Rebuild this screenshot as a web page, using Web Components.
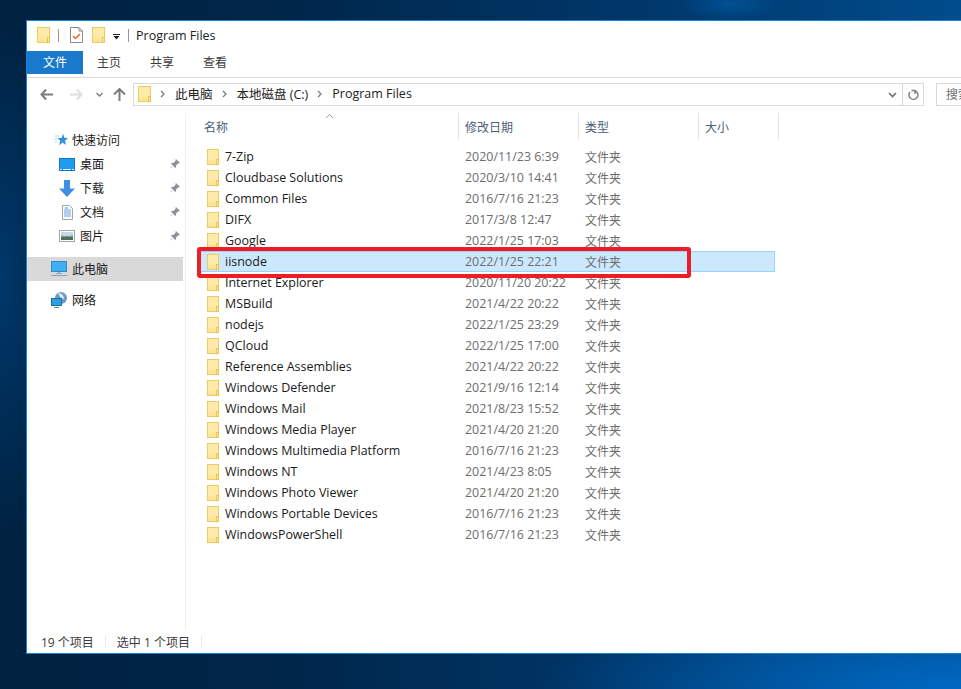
<!DOCTYPE html>
<html lang="zh-CN">
<head>
<meta charset="utf-8">
<title>Program Files</title>
<style>
html, body { margin: 0; height: 100%; overflow: hidden; }
body { font: 12px "Open Sans", "Noto Sans CJK SC", sans-serif; color: #1a1a1a; }
</style>
</head>
<body>
<win-desktop>
  <explorer-window>
    <title-bar slot="top" label="Program Files"></title-bar>
    <ribbon-tabs slot="top"></ribbon-tabs>
    <nav-bar slot="top"></nav-bar>
    <side-nav slot="side">
      <side-item kind="star" text="快速访问" style="--indent:27px;--gap:4px;--icon:14px"></side-item>
      <side-item kind="desktop" text="桌面" pinned></side-item>
      <side-item kind="down" text="下载" pinned></side-item>
      <side-item kind="doc" text="文档" pinned></side-item>
      <side-item kind="pic" text="图片" pinned></side-item>
      <side-item kind="pc" text="此电脑" selected style="--indent:24px;--gap:5px;margin-top:9px"></side-item>
      <side-item kind="net" text="网络" style="--indent:24px;--gap:5px;margin-top:7px"></side-item>
    </side-nav>
    <file-list slot="main">
      <file-row name="7-Zip" date="2020/11/23 6:39"></file-row>
      <file-row name="Cloudbase Solutions" date="2020/3/10 14:41"></file-row>
      <file-row name="Common Files" date="2016/7/16 21:23"></file-row>
      <file-row name="DIFX" date="2017/3/8 12:47"></file-row>
      <file-row name="Google" date="2022/1/25 17:03"></file-row>
      <file-row name="iisnode" date="2022/1/25 22:21" selected></file-row>
      <file-row name="Internet Explorer" date="2020/11/20 20:22"></file-row>
      <file-row name="MSBuild" date="2021/4/22 20:22"></file-row>
      <file-row name="nodejs" date="2022/1/25 23:29"></file-row>
      <file-row name="QCloud" date="2022/1/25 17:00"></file-row>
      <file-row name="Reference Assemblies" date="2021/4/22 20:22"></file-row>
      <file-row name="Windows Defender" date="2021/9/16 12:14"></file-row>
      <file-row name="Windows Mail" date="2021/8/23 15:52"></file-row>
      <file-row name="Windows Media Player" date="2021/4/20 21:20"></file-row>
      <file-row name="Windows Multimedia Platform" date="2016/7/16 21:23"></file-row>
      <file-row name="Windows NT" date="2021/4/23 8:05"></file-row>
      <file-row name="Windows Photo Viewer" date="2021/4/20 21:20"></file-row>
      <file-row name="Windows Portable Devices" date="2016/7/16 21:23"></file-row>
      <file-row name="WindowsPowerShell" date="2016/7/16 21:23"></file-row>
    </file-list>
    <status-bar slot="bottom"></status-bar>
  </explorer-window>
</win-desktop>

<script>
const FOLDER = (w, h) => `
  <svg width="${w}" height="${h}" viewBox="0 0 ${w} ${h}" style="display:block;flex:none">
    <rect x=".5" y=".5" width="${w - 1}" height="${h - 1}" fill="#ffe595" stroke="#eecb62"/>
    <rect x="1" y="1" width="${w - 2}" height="${h - 6}" fill="#ffeaa9"/>
    <rect x="${w - 2.5}" y="${h - 5.5}" width="2" height="5" fill="#ffe9a0" stroke="#eac453"/>
  </svg>`;

const SIDE_ICONS = {
  star: `<svg width="14" height="14" viewBox="0 0 14 14"><path d="M1 3h4M0 6h3M1 9h2" stroke="#a9d4f5"/><path d="M9 .5l1.300 4.300 3.700.2-3 2.700 1 4.300-3.300-2.500-3.700 2.700 1.300-4.400L3.500 5l4.200-.1z" fill="#2f90e2"/></svg>`,
  desktop: `<svg width="16" height="13" viewBox="0 0 16 13"><rect width="16" height="13" fill="#0f78d4"/><rect x="1" y="1" width="14" height="10" fill="#1f9bf0"/><path d="M1 11.500h14" stroke="#e8f4fd"/><path d="M3 11.500h1M12 11.500h1" stroke="#0f78d4"/></svg>`,
  down: `<svg width="16" height="17" viewBox="0 0 16 17"><path d="M5 0h6v8.500h5L8 17 0 8.500h5z" fill="#3f8fe4"/></svg>`,
  doc: `<svg width="11" height="15" viewBox="0 0 11 15"><path d="M.5.500h7l3 3v11H.5z" fill="#fbfbfb" stroke="#9ea5ab"/><path d="M2 5h7M2 7h7M2 9h7M2 11h7" stroke="#6ba6da"/><path d="M3 3h3" stroke="#3f8fd0"/></svg>`,
  pic: `<svg width="16" height="12" viewBox="0 0 16 12"><rect x=".5" y=".5" width="15" height="11" fill="#fff" stroke="#a6a6a6"/><rect x="2" y="2" width="12" height="4" fill="#c6d9e6"/><rect x="2" y="6" width="12" height="4" fill="#4f7060"/><path d="M2 5l6 1.500 6-1.500v2H2z" fill="#8aa99a"/></svg>`,
  pc: `<svg width="16" height="16" viewBox="0 0 16 16"><rect x=".5" y=".5" width="15" height="10" fill="#3db0f2" stroke="#3a88bf"/><path d="M5 12.500h6M7 11.500h2" stroke="#8fa9bb"/><path d="M0 14.500h16" stroke="#7ea6c3"/></svg>`,
  net: `<svg width="16" height="16" viewBox="0 0 16 16"><circle cx="10" cy="6" r="6" fill="#6d9bc4"/><path d="M7 1c3 0 6 2 6 6l-3-1-2-3z" fill="#d8e9f6"/><rect x=".5" y="6.500" width="10" height="7" fill="#2aa0e0" stroke="#1c6f9f"/><path d="M3 15.500h5" stroke="#6c8ca3"/></svg>`
};

const CRUMB = `<svg class="crumb" width="5" height="8" viewBox="0 0 5 8"><path d="M1 1l3 3-3 3" fill="none" stroke="#7c7c7c" stroke-width="1.300"/></svg>`;

class WinDesktop extends HTMLElement {
  connectedCallback() {
    this.attachShadow({ mode: 'open' }).innerHTML = `
      <style>
        :host {
          display: block;
          box-sizing: border-box;
          width: 961px;
          height: 689px;
          padding: 20px 0 0 26px;
          overflow: hidden;
          background:
            radial-gradient(50px 16px at 730px 4px, rgba(0,95,170,.6), transparent),
            radial-gradient(420px 90px at 100% 100%, #0068c2, transparent),
            radial-gradient(70px 270px at 0 280px, #00386c, transparent),
            linear-gradient(90deg, #00213f 0, #00264a 30%, #003a70 72%, #004c8c 100%);
        }
      </style>
      <slot></slot>`;
  }
}

class ExplorerWindow extends HTMLElement {
  connectedCallback() {
    this.attachShadow({ mode: 'open' }).innerHTML = `
      <style>
        :host {
          display: flex;
          flex-direction: column;
          box-sizing: border-box;
          width: 960px;
          height: 634px;
          background: #fff;
          border: 1px solid #1883d7;
          border-right: 0;
        }
        .body { flex: 1; display: flex; min-height: 0; padding-top: 7px; }
      </style>
      <slot name="top"></slot>
      <div class="body">
        <slot name="side"></slot>
        <slot name="main"></slot>
      </div>
      <slot name="bottom"></slot>`;
  }
}

class TitleBar extends HTMLElement {
  connectedCallback() {
    this.attachShadow({ mode: 'open' }).innerHTML = `
      <style>
        :host {
          display: flex;
          align-items: center;
          box-sizing: border-box;
          height: 30px;
          padding: 0 0 2px 10px;
          font-size: 12.5px;
          color: #222;
        }
        .sep { width: 1px; height: 13px; background: #9a9a9a; }
      </style>
      ${FOLDER(13, 16)}
      <span class="sep" style="margin-left:8px"></span>
      <svg style="margin-left:11px;flex:none" width="13" height="16" viewBox="0 0 13 16">
        <path d="M.5.500h8.500l3.500 3.500v11.500H.5z" fill="#fff" stroke="#8a8a8a"/>
        <path d="M9 .5v3.500h3.500" fill="none" stroke="#8a8a8a"/>
        <path d="M3 9l2.500 2.500L10 7" fill="none" stroke="#e8632a" stroke-width="1.500"/>
      </svg>
      <span style="display:block;margin-left:9px">${FOLDER(13, 16)}</span>
      <svg style="margin-left:8px;flex:none;margin-top:3px" width="7" height="6" viewBox="0 0 7 6">
        <path d="M0 .5h7" stroke="#222"/><path d="M.5 2h6L3.500 5.500z" fill="#222"/>
      </svg>
      <span class="sep" style="margin-left:8px"></span>
      <span style="margin-left:7px">${this.getAttribute('label')}</span>`;
  }
}

class RibbonTabs extends HTMLElement {
  connectedCallback() {
    this.attachShadow({ mode: 'open' }).innerHTML = `
      <style>
        :host {
          display: flex;
          height: 26px;
          border-bottom: 1px solid #dadbdc;
          font-size: 12px;
          color: #3b3b3b;
        }
        span { height: 23px; line-height: 23px; padding: 0 15px 0 14px; }
        .file { width: 56px; padding: 0; text-align: center; background: #1979ca; color: #fff; }
      </style>
      <span class="file">文件</span><span>主页</span><span>共享</span><span>查看</span>`;
  }
}

class NavBar extends HTMLElement {
  connectedCallback() {
    this.attachShadow({ mode: 'open' }).innerHTML = `
      <style>
        :host {
          display: flex;
          align-items: center;
          padding: 5px 0 0 13px;
          font-size: 12.5px;
          color: #222;
        }
        svg { display: block; flex: none; }
        .address {
          display: flex;
          align-items: center;
          flex: none;
          box-sizing: border-box;
          width: 791px;
          height: 23px;
          margin-left: 7px;
          padding: 0 0 2px 4px;
          border: 1px solid #d9d9d9;
        }
        .crumb { margin: 0 10px 0 9px; }
        .spacer { flex: 1; }
        .drop { margin-top: 3px; }
        .refresh {
          display: flex;
          align-items: center;
          justify-content: center;
          width: 20px;
          align-self: stretch;
          margin: 0 0 -2px 5px;
          border-left: 1px solid #d9d9d9;
        }
        .search {
          flex: none;
          box-sizing: border-box;
          width: 60px;
          height: 23px;
          line-height: 21px;
          margin-left: 12px;
          padding-left: 9px;
          border: 1px solid #d9d9d9;
          color: #6d6d6d;
          font-size: 12px;
          white-space: nowrap;
          overflow: hidden;
        }
      </style>
      <svg width="13" height="11" viewBox="0 0 13 11"><path d="M6 .5L1.500 5.500 6 10.500M1.500 5.500H13" fill="none" stroke="#7c7c7c" stroke-width="2"/></svg>
      <svg style="margin-left:17px" width="13" height="11" viewBox="0 0 13 11"><path d="M7 .5l4.500 5L7 10.500M11.500 5.500H0" fill="none" stroke="#dedede" stroke-width="2"/></svg>
      <svg style="margin-left:13px" width="7" height="5" viewBox="0 0 7 5"><path d="M.5 1l3 3 3-3" fill="none" stroke="#7c7c7c" stroke-width="1.300"/></svg>
      <svg style="margin-left:10px" width="13" height="13" viewBox="0 0 13 13"><path d="M1 6.500l5.500-5.500 5.500 5.500M6.500 1.500V13" fill="none" stroke="#7c7c7c" stroke-width="2"/></svg>
      <div class="address">
        ${FOLDER(13, 16)}
        ${CRUMB}
        <span>此电脑</span>
        ${CRUMB}
        <span>本地磁盘 (C:)</span>
        ${CRUMB}
        <span>Program Files</span>
        <span class="spacer"></span>
        <svg class="drop" width="9" height="6" viewBox="0 0 9 6"><path d="M1 1l3.500 3.500L8 1" fill="none" stroke="#6e6e6e" stroke-width="1.600"/></svg>
        <span class="refresh"><svg width="11" height="12" viewBox="0 0 11 12"><path d="M3.500 1.500H7V5M6.500 1.500a4.500 4.500 0 1 1-4.500 1.500" fill="none" stroke="#7c7c7c" stroke-width="1.400"/></svg></span>
      </div>
      <div class="search">搜索"Program Files"</div>`;
  }
}

class SideNav extends HTMLElement {
  connectedCallback() {
    this.attachShadow({ mode: 'open' }).innerHTML = `
      <style>
        :host {
          display: block;
          box-sizing: border-box;
          width: 159px;
          flex: none;
          padding-top: 15px;
          border-right: 1px solid #f0f0f0;
          font-size: 12px;
        }
      </style>
      <slot></slot>`;
  }
}

class SideItem extends HTMLElement {
  connectedCallback() {
    const kind = this.getAttribute('kind');
    const selected = this.hasAttribute('selected');
    this.attachShadow({ mode: 'open' }).innerHTML = `
      <style>
        :host {
          display: flex;
          align-items: center;
          box-sizing: border-box;
          width: 156px;
          height: 24px;
          padding-left: var(--indent, 32px);
          background: ${selected ? '#d9d9d9' : 'transparent'};
          color: #1a1a1a;
        }
        .icon { width: var(--icon, 16px); display: flex; justify-content: center; flex: none; }
        .text { margin-left: var(--gap, 5px); flex: 1; }
        .pin { margin-right: 3px; display: block; }
      </style>
      <span class="icon">${SIDE_ICONS[kind]}</span>
      <span class="text">${this.getAttribute('text')}</span>
      ${this.hasAttribute('pinned') ? `<svg class="pin" width="10" height="10" viewBox="0 0 10 10"><path d="M6 0l4 4-1 .6-.8-.3L6 6.500 6.200 8 5 9 3.300 6.700.5 9.500l-.3-.3L3 6.500 1 4.800 2 3.800l1.500.2L5.700 1.800l-.3-.8z" fill="#8b9198"/></svg>` : ''}`;
  }
}

class FileList extends HTMLElement {
  connectedCallback() {
    this.attachShadow({ mode: 'open' }).innerHTML = `
      <style>
        :host { display: block; flex: 1; position: relative; min-width: 0; font-size: 12.45px; }
        .head { display: flex; height: 27px; padding-left: 12px; color: #4c607a; font-size: 12px; position: relative; }
        .head span { box-sizing: border-box; line-height: 29px; padding-left: 6px; border-right: 1px solid #e5e5e5; }
        .sort { position: absolute; left: 139px; top: 0; display: block; }
        .rows { padding: 6px 0 0 11px; }
        .mark {
          position: absolute;
          left: 11px;
          top: 134px;
          width: 494px;
          height: 31px;
          box-sizing: border-box;
          border: 4px solid #ee1c25;
          border-radius: 3px;
          pointer-events: none;
        }
      </style>
      <div class="head">
        <svg class="sort" width="9" height="6" viewBox="0 0 9 6"><path d="M1 5l3.500-3.500L8 5" fill="none" stroke="#9aa0a6"/></svg>
        <span style="width:261px">名称</span>
        <span style="width:120px">修改日期</span>
        <span style="width:120px">类型</span>
        <span style="width:80px">大小</span>
      </div>
      <div class="rows"><slot></slot></div>
      <div class="mark"></div>`;
  }
}

class FileRow extends HTMLElement {
  connectedCallback() {
    const selected = this.hasAttribute('selected');
    this.attachShadow({ mode: 'open' }).innerHTML = `
      <style>
        :host {
          display: flex;
          align-items: center;
          box-sizing: border-box;
          width: 578px;
          height: 21px;
          padding-left: 10px;
          ${selected ? 'background:#cce8ff;box-shadow:inset 0 0 0 1px #99d1ff;' : ''}
        }
        .name { width: 240px; margin-left: 6px; color: #1a1a1a; white-space: nowrap; }
        .date { width: 120px; color: #6d6d6d; white-space: nowrap; }
        .type { color: #6d6d6d; font-size: 12px; }
      </style>
      ${FOLDER(12, 16)}
      <span class="name">${this.getAttribute('name')}</span>
      <span class="date">${this.getAttribute('date')}</span>
      <span class="type">文件夹</span>`;
  }
}

class StatusBar extends HTMLElement {
  connectedCallback() {
    this.attachShadow({ mode: 'open' }).innerHTML = `
      <style>
        :host {
          display: flex;
          align-items: center;
          height: 23px;
          flex: none;
          padding-left: 14px;
          font-size: 12px;
          color: #3b3b3b;
        }
        .sep { width: 1px; height: 11px; background: #eaeaea; }
      </style>
      <span>19 个项目</span>
      <span class="sep" style="margin-left:11px"></span>
      <span style="margin-left:11px">选中 1 个项目</span>
      <span class="sep" style="margin-left:11px"></span>`;
  }
}

customElements.define('win-desktop', WinDesktop);
customElements.define('explorer-window', ExplorerWindow);
customElements.define('title-bar', TitleBar);
customElements.define('ribbon-tabs', RibbonTabs);
customElements.define('nav-bar', NavBar);
customElements.define('side-nav', SideNav);
customElements.define('side-item', SideItem);
customElements.define('file-list', FileList);
customElements.define('file-row', FileRow);
customElements.define('status-bar', StatusBar);
</script>
</body>
</html>
